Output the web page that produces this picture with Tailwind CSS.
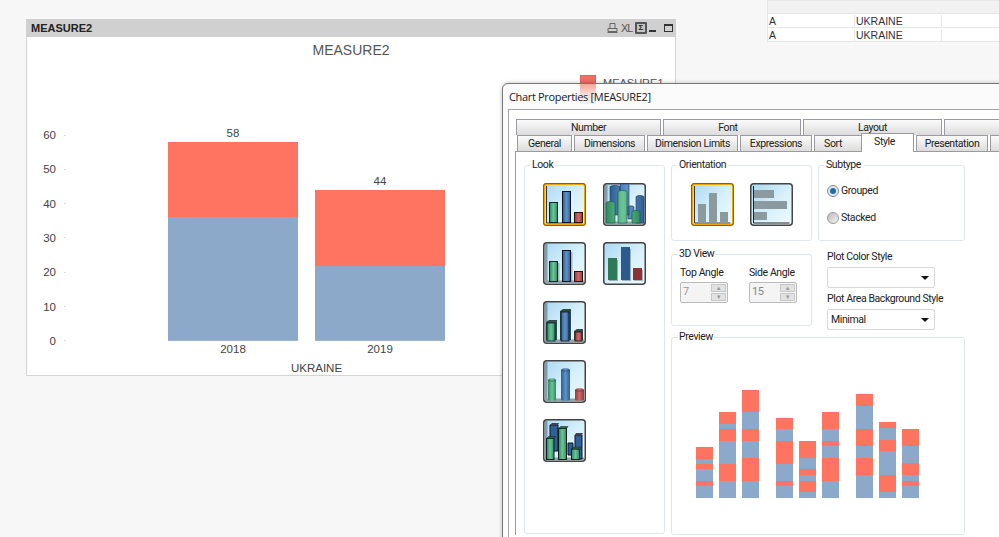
<!DOCTYPE html>
<html lang="en">
<head>
<meta charset="UTF-8">
<title>Chart Properties</title>
<script src="https://cdn.jsdelivr.net/npm/@tailwindcss/browser@4"></script>
</head>
<body class="bg-[#f7f7f7] font-['Liberation_Sans',sans-serif] overflow-hidden">
<!-- shared icon parts -->
<svg class="absolute w-0 h-0" aria-hidden="true">
  <defs>
    <linearGradient id="sky" x1="0" y1="0" x2="1" y2="1"><stop offset="0" stop-color="#a9d8f2"/><stop offset=".55" stop-color="#d9f1fb"/><stop offset="1" stop-color="#eefafd"/></linearGradient>
    <linearGradient id="gr" x1="0" y1="0" x2="1" y2="0"><stop offset="0" stop-color="#2f8a5c"/><stop offset=".5" stop-color="#6cc598"/><stop offset="1" stop-color="#2f8a5c"/></linearGradient>
    <linearGradient id="bl" x1="0" y1="0" x2="1" y2="0"><stop offset="0" stop-color="#2c5f94"/><stop offset=".5" stop-color="#5f93c8"/><stop offset="1" stop-color="#2c5f94"/></linearGradient>
    <linearGradient id="rd" x1="0" y1="0" x2="1" y2="0"><stop offset="0" stop-color="#963a3d"/><stop offset=".5" stop-color="#d0686a"/><stop offset="1" stop-color="#963a3d"/></linearGradient>
    <symbol id="frame" viewBox="0 0 43 43"><rect x=".75" y=".75" width="41.5" height="41.5" rx="3" fill="url(#sky)" stroke="#444" stroke-width="1.5"/></symbol>
    <symbol id="wall" viewBox="0 0 43 43"><path d="M2 2h2.500v36.500H41V41H2z" fill="#76858f" opacity=".75"/></symbol>
  </defs>
</svg>

<div class="relative w-[999px] h-[537px] overflow-hidden">
  <!-- table behind -->
  <div class="absolute left-[767px] top-0 w-[240px] text-[10.5px] text-[#333] border-l border-[#e6e6e6]">
    <div class="h-[14px] bg-[#f2f2f2] border-y border-[#e6e6e6]"></div>
    <div class="grid grid-cols-[87px_87px_1fr] h-[14px] pt-px bg-white border-b border-[#e6e6e6] leading-[13px]">
      <div class="pl-[1px] border-r border-[#e6e6e6]">A</div><div class="pl-[1px] border-r border-[#e6e6e6]">UKRAINE</div><div></div>
    </div>
    <div class="grid grid-cols-[87px_87px_1fr] h-[14px] pt-px bg-white border-b border-[#e6e6e6] leading-[13px]">
      <div class="pl-[1px] border-r border-[#e6e6e6]">A</div><div class="pl-[1px] border-r border-[#e6e6e6]">UKRAINE</div><div></div>
    </div>
  </div>

  <!-- chart window -->
  <div class="absolute left-[26px] top-[19px] w-[650px] h-[357px] border border-[#d4d4d4] border-t-0 bg-white">
    <div class="h-[18px] bg-[#d0d0d0] -mx-px flex items-center justify-between pl-[5px] pr-[3px]">
      <span class="text-[11px] font-bold text-[#222] leading-none">MEASURE2</span>
      <div class="flex items-center text-[#555]">
        <svg class="w-[11px] h-[11px]" viewBox="0 0 11 11" fill="none" stroke="#666"><path d="M3 .5h5v5H3zM1 5.500h9v3H1zM.5 9.500h10"/></svg>
        <span class="ml-[3px] w-[10px] text-[11px] tracking-[-1px] leading-none">XL</span>
        <span class="ml-[4px] w-[12px] h-[12px] border-2 border-[#555] rounded-[1px] flex items-center justify-center bg-[#c4c4c4] text-[8px] leading-none text-[#222] font-bold">Σ</span>
        <span class="ml-[2px] w-[7px] h-[2px] bg-[#333] mt-[6px]"></span>
        <span class="ml-[8px] w-[9px] h-[8px] border border-[#333] border-t-2"></span>
      </div>
    </div>
    <div class="h-[27px] text-center text-[14px] leading-[27px] text-[#555]">MEASURE2</div>
    <!-- legend, runs under the dialog -->
    <div class="absolute left-[553px] top-[56px] flex gap-[7px]">
      <span class="w-[16px] h-[14px] bg-[#ef6f62] border border-[#d9685c]"></span>
      <span class="text-[11px] leading-[14px] text-[#555] pt-px">MEASURE1</span>
    </div>
    <!-- plot -->
    <div class="mt-[64px] flex items-start h-[228px]">
      <div class="w-[39px] h-[220px] flex flex-col justify-between text-[11.5px] leading-[14px] text-[#444]">
        <div class="flex justify-end items-center gap-[8px]"><span>60</span><i class="w-[2px] h-px bg-[#ddd]"></i></div>
        <div class="flex justify-end items-center gap-[8px]"><span>50</span><i class="w-[2px] h-px bg-[#ddd]"></i></div>
        <div class="flex justify-end items-center gap-[8px]"><span>40</span><i class="w-[2px] h-px bg-[#ddd]"></i></div>
        <div class="flex justify-end items-center gap-[8px]"><span>30</span><i class="w-[2px] h-px bg-[#ddd]"></i></div>
        <div class="flex justify-end items-center gap-[8px]"><span>20</span><i class="w-[2px] h-px bg-[#ddd]"></i></div>
        <div class="flex justify-end items-center gap-[8px]"><span>10</span><i class="w-[2px] h-px bg-[#ddd]"></i></div>
        <div class="flex justify-end items-center gap-[8px]"><span>0</span><i class="w-[2px] h-px bg-[#ddd]"></i></div>
      </div>
      <div class="ml-[102px] h-full flex items-end gap-[17px] text-[11.5px] leading-[14px] text-[#444] text-center">
        <div class="w-[130px]">
          <div class="mb-[2px]">58</div>
          <div class="h-[75px] bg-[#ff7361]"></div>
          <div class="h-[124px] bg-[#8da9c9] border-b border-[#9db6d8]"></div>
          <div class="mt-px">2018</div>
        </div>
        <div class="w-[130px]">
          <div class="mb-[2px]">44</div>
          <div class="h-[76px] bg-[#ff7361]"></div>
          <div class="h-[75px] bg-[#8da9c9] border-b border-[#9db6d8]"></div>
          <div class="mt-px">2019</div>
        </div>
      </div>
    </div>
    <div class="mt-[5px] w-[579px] text-center text-[11.5px] leading-[14px] text-[#444]">UKRAINE</div>
  </div>

  <!-- properties dialog -->
  <div class="absolute left-[502px] top-[83px] w-[520px] h-[480px] bg-[#fbfbfc] border border-[#777] rounded-tl-[6px] shadow-[0_0_4px_rgba(0,0,0,0.25)]">
    <div class="absolute left-[77px] top-0 w-[16px] h-[20px] bg-linear-to-b from-[#f5a499] via-[#f7dcd8] to-[#eef3fa] pointer-events-none"></div>
    <div class="relative h-[25px] pl-[6px] text-[11px] leading-[25px] text-[#222] font-['Open_Sans',sans-serif] tracking-[-0.33px]">Chart Properties [MEASURE2]</div>
    <div class="ml-[5px] h-full bg-white border-l border-t border-[#a3a3a8] pl-[6px] pt-[9px] font-['Roboto',sans-serif] text-[10.5px] text-[#222] tracking-[-0.4px]">
      <!-- tab rows -->
      <div class="flex gap-[2px] h-[16px] ml-[1px] text-center leading-[15px]">
        <div class="w-[145px] shrink-0 border border-[#9a9aa0] border-b-0 bg-linear-to-b from-[#fbfbfb] to-[#dcdcdc]">Number</div>
        <div class="w-[138px] shrink-0 pr-[8px] border border-[#9a9aa0] border-b-0 bg-linear-to-b from-[#fbfbfb] to-[#dcdcdc]">Font</div>
        <div class="w-[139px] shrink-0 border border-[#9a9aa0] border-b-0 bg-linear-to-b from-[#fbfbfb] to-[#dcdcdc]">Layout</div>
        <div class="w-[60px] shrink-0 border border-[#9a9aa0] border-b-0 bg-linear-to-b from-[#fbfbfb] to-[#dcdcdc]"></div>
      </div>
      <div class="flex items-end h-[16px] ml-[2px] text-center leading-[15px] relative z-10">
        <div class="w-[55px] shrink-0 mr-[2px] h-[16px] border border-[#9a9aa0] border-b-0 bg-linear-to-b from-[#fbfbfb] to-[#dcdcdc]">General</div>
        <div class="w-[71px] shrink-0 mr-[2px] h-[16px] border border-[#9a9aa0] border-b-0 bg-linear-to-b from-[#fbfbfb] to-[#dcdcdc]">Dimensions</div>
        <div class="w-[91px] shrink-0 mr-[2px] h-[16px] border border-[#9a9aa0] border-b-0 bg-linear-to-b from-[#fbfbfb] to-[#dcdcdc]">Dimension Limits</div>
        <div class="w-[72px] shrink-0 mr-[2px] h-[16px] border border-[#9a9aa0] border-b-0 bg-linear-to-b from-[#fbfbfb] to-[#dcdcdc]">Expressions</div>
        <div class="w-[47px] shrink-0 pr-[10px] h-[16px] border border-[#9a9aa0] border-b-0 border-r-0 bg-linear-to-b from-[#fbfbfb] to-[#dcdcdc]">Sort</div>
        <div class="w-[53px] shrink-0 pr-[6px] mr-[2px] -mb-px h-[19px] border border-[#9a9aa0] border-b-0 bg-white leading-[15px]">Style</div>
        <div class="w-[72px] shrink-0 mr-[2px] h-[16px] border border-[#9a9aa0] border-b-0 bg-linear-to-b from-[#fbfbfb] to-[#dcdcdc]">Presentation</div>
        <div class="w-[60px] shrink-0 h-[16px] border border-[#9a9aa0] border-b-0 bg-linear-to-b from-[#fbfbfb] to-[#dcdcdc]"></div>
      </div>
      <!-- tab page -->
      <div class="border-l border-t border-[#9a9aa0] bg-white pl-[8px] pt-[6px] flex gap-[6px] items-start">
        <fieldset class="w-[141px] h-[376px] border border-[#dfe6ee] rounded-[3px]">
          <legend class="ml-[5px] px-[2px] leading-[14px]">Look</legend>
          <div class="grid grid-cols-[43px_43px] gap-x-[17px] gap-y-[16px] pl-[18px] pt-[11px]">
            <svg class="w-[43px] h-[43px]" viewBox="0 0 43 43">
              <rect x="1" y="1" width="41" height="41" rx="2.5" fill="url(#sky)" stroke="#f0a400" stroke-width="2"/>
              <rect x=".4" y=".4" width="42.2" height="42.2" rx="3" fill="none" stroke="#4a3a10" stroke-width=".7"/>
              <path d="M3.500 3v37h36" fill="none" stroke="#333" stroke-width="1"/>
              <rect x="6.500" y="19.500" width="8" height="20" fill="url(#gr)" stroke="#123" stroke-width="1"/>
              <rect x="19.500" y="8.500" width="8" height="31" fill="url(#bl)" stroke="#112" stroke-width="1"/>
              <rect x="31.500" y="29.500" width="8" height="10" fill="url(#rd)" stroke="#211" stroke-width="1"/>
            </svg>
            <svg class="w-[43px] h-[43px]" viewBox="0 0 43 43">
              <use href="#frame"/><use href="#wall"/>
              <path d="M7 4c0-2 10-2 10 0v28H7zM17 2c0-1.500 9-1.500 9 0v30h-9zM33 14c0-2 8-2 8 0v26h-8zM25 24c0-1.500 6-1.500 6 0v12h-6z" fill="url(#bl)" stroke="#234" stroke-width=".6"/>
              <path d="M3 20c0-2 9-2 9 0v20H3zM15 9c0-2 9-2 9 0v31h-9zM29 29c0-2 8-2 8 0v11h-8z" fill="url(#gr)" stroke="#154" stroke-width=".6"/>
            </svg>
            <svg class="w-[43px] h-[43px]" viewBox="0 0 43 43">
              <use href="#frame"/><use href="#wall"/>
              <path d="M14.500 21h2v19h-2zM27.500 10h2v30h-2z" fill="#7d8f9c" opacity=".6"/>
              <rect x="6.500" y="19.500" width="8" height="20" fill="url(#gr)" stroke="#123"/>
              <rect x="19.500" y="8.500" width="8" height="31" fill="url(#bl)" stroke="#112"/>
              <rect x="31.500" y="29.500" width="8" height="10" fill="url(#rd)" stroke="#211"/>
            </svg>
            <svg class="w-[43px] h-[43px]" viewBox="0 0 43 43">
              <use href="#frame"/>
              <rect x="5" y="16" width="9" height="22" fill="#2e7a57"/><rect x="18" y="5" width="9" height="33" fill="#2d5a8c"/><rect x="30" y="26" width="9" height="12" fill="#8c3336"/>
              <path d="M14 18h1v21H6v-1h8zM27 7h1v32h-9v-1h8zM39 28h1v11h-9v-1h8z" fill="#6d8794" opacity=".6"/>
            </svg>
            <svg class="w-[43px] h-[43px] col-start-1" viewBox="0 0 43 43">
              <use href="#frame"/><use href="#wall"/>
              <path d="M3 21l3-2h8v20H3zM17 10l3-2h8v31H17zM31 30l3-2h6v11h-9z" fill="#1e3b33" opacity=".9"/>
              <rect x="4" y="22" width="8" height="18" fill="url(#gr)" stroke="#123" stroke-width=".8"/>
              <rect x="18" y="11" width="8" height="29" fill="url(#bl)" stroke="#112" stroke-width=".8"/>
              <rect x="32" y="31" width="7" height="9" fill="url(#rd)" stroke="#211" stroke-width=".8"/>
            </svg>
            <svg class="w-[43px] h-[43px] col-start-1" viewBox="0 0 43 43">
              <use href="#frame"/><use href="#wall"/>
              <path d="M5 20c0-2.500 8-2.500 8 0v20c0 1-8 1-8 0z" fill="url(#gr)"/>
              <path d="M18 10c0-2.500 9-2.500 9 0v30c0 1-9 1-9 0z" fill="url(#bl)"/>
              <path d="M32 30c0-2.500 9-2.500 9 0v10c0 1-9 1-9 0z" fill="url(#rd)"/>
              <path d="M5 20c0 1.500 8 1.500 8 0M18 10c0 1.500 9 1.500 9 0M32 30c0 1.500 9 1.500 9 0" stroke="#234" fill="none" stroke-width=".5"/>
            </svg>
            <svg class="w-[43px] h-[43px] col-start-1" viewBox="0 0 43 43">
              <use href="#frame"/><use href="#wall"/>
              <path d="M7 6h8v26H7zM32 16h7v24h-7zM25 24h5v12h-5z" fill="#2f6099" stroke="#0c1520" stroke-width="1"/>
              <path d="M9 4h7l-1 2H7zM33 14h7l-1 2h-7z" fill="#445"/>
              <rect x="3.500" y="19.500" width="7.500" height="21" fill="url(#gr)" stroke="#0c1f18"/>
              <rect x="15.500" y="9.500" width="8" height="31" fill="url(#gr)" stroke="#0c1f18"/>
              <rect x="28.500" y="30" width="8" height="10.500" fill="url(#gr)" stroke="#0c1f18"/>
              <path d="M3.500 19.500l2-2h7l-1.500 2zM15.500 9.500l2-2h7.500l-1.500 2zM28.500 30l2-2h7l-1 2z" fill="#2d6a4c" stroke="#0c1f18" stroke-width=".5"/>
            </svg>
          </div>
        </fieldset>

        <div class="w-[294px]">
          <div class="flex gap-[6px]">
            <fieldset class="w-[141px] h-[83px] border border-[#dfe6ee] rounded-[3px]">
              <legend class="ml-[5px] px-[2px] leading-[14px]">Orientation</legend>
              <div class="flex gap-[16px] pl-[19px] pt-[11px]">
                <svg class="w-[43px] h-[43px]" viewBox="0 0 43 43">
                  <rect x="1" y="1" width="41" height="41" rx="2.5" fill="url(#sky)" stroke="#f0a400" stroke-width="2"/>
                  <rect x=".4" y=".4" width="42.200" height="42.200" rx="3" fill="none" stroke="#4a3a10" stroke-width=".7"/>
                  <path d="M3.500 3v37h36" fill="none" stroke="#333"/>
                  <path d="M7 21h8v19H7zM18 10h8v30h-8zM29 29h8v11h-8z" fill="#8b9a9e"/>
                </svg>
                <svg class="w-[43px] h-[43px]" viewBox="0 0 43 43">
                  <use href="#frame"/>
                  <path d="M3.500 3v37h36" fill="none" stroke="#222"/>
                  <path d="M4 7h20v8H4zM4 18h33v8H4zM4 29h13v8H4z" fill="#8b9a9e"/>
                </svg>
              </div>
            </fieldset>
            <fieldset class="w-[147px] h-[83px] border border-[#dfe6ee] rounded-[3px]">
              <legend class="ml-[5px] px-[2px] leading-[14px]">Subtype</legend>
              <div class="pl-[8px] pt-[11px] flex flex-col gap-[12px]">
                <div class="flex items-center gap-[2px] h-[15px]"><span class="w-[12px] h-[12px] rounded-full border border-[#888] bg-[#dfeaf2] flex items-center justify-center"><i class="w-[6px] h-[6px] rounded-full bg-[#1f6ea8]"></i></span>Grouped</div>
                <div class="flex items-center gap-[2px] h-[15px]"><span class="w-[12px] h-[12px] rounded-full border border-[#999] bg-linear-to-br from-[#bbb] to-[#f4f4f4]"></span>Stacked</div>
              </div>
            </fieldset>
          </div>
          <div class="flex gap-[15px] mt-[6px] items-start">
            <fieldset class="w-[141px] h-[79px] border border-[#dfe6ee] rounded-[3px]">
              <legend class="ml-[6px] px-[1px] leading-[14px]">3D View</legend>
              <div class="flex gap-[21px] pl-[8px] pt-[5px]">
                <div>
                  <div class="leading-[14px] mb-[2px]">Top Angle</div>
                  <div class="w-[48px] h-[21px] flex items-center justify-between border border-[#bbb] rounded-[2px] bg-[#f4f4f4] pl-[2px] pr-px text-[#999] text-[11px]">7
                    <span class="flex flex-col w-[15px] h-[17px] gap-px"><i class="flex-1 bg-[#e2e2e2] border border-[#c8c8c8] text-[6px] leading-[5px] not-italic text-center text-[#999]">▲</i><i class="flex-1 bg-[#e2e2e2] border border-[#c8c8c8] text-[6px] leading-[5px] not-italic text-center text-[#999]">▼</i></span>
                  </div>
                </div>
                <div>
                  <div class="leading-[14px] mb-[2px]">Side Angle</div>
                  <div class="w-[48px] h-[21px] flex items-center justify-between border border-[#bbb] rounded-[2px] bg-[#f4f4f4] pl-[2px] pr-px text-[#888] text-[11px]">15
                    <span class="flex flex-col w-[15px] h-[17px] gap-px"><i class="flex-1 bg-[#e2e2e2] border border-[#c8c8c8] text-[6px] leading-[5px] not-italic text-center text-[#999]">▲</i><i class="flex-1 bg-[#e2e2e2] border border-[#c8c8c8] text-[6px] leading-[5px] not-italic text-center text-[#999]">▼</i></span>
                  </div>
                </div>
              </div>
            </fieldset>
            <div class="pt-[3px]">
              <div class="leading-[14px] mb-[3px]">Plot Color Style</div>
              <div class="w-[108px] h-[21px] border border-[#d8d8d8] rounded-[2px] bg-white flex items-center justify-end pr-[5px] text-[#111]"><svg class="w-[8px] h-[4px]" viewBox="0 0 8 4"><path d="M0 0h8L4 4z" fill="#111"/></svg></div>
              <div class="leading-[14px] mt-[4px] mb-[3px]">Plot Area Background Style</div>
              <div class="w-[108px] h-[21px] border border-[#d8d8d8] rounded-[2px] bg-white flex items-center justify-between pl-[3px] pr-[5px]">Minimal<svg class="w-[8px] h-[4px]" viewBox="0 0 8 4"><path d="M0 0h8L4 4z" fill="#111"/></svg></div>
            </div>
          </div>
          <fieldset class="w-[294px] h-[205px] border border-[#dfe6ee] rounded-[3px]">
            <legend class="ml-[6px] px-[1px] leading-[14px]">Preview</legend>
            <div id="preview" class="flex items-end h-[154px] pl-[23px]"></div>
          </fieldset>
        </div>
      </div>
    </div>
  </div>
</div>

<script>
  // segment heights bottom to top: blue, red, blue, red, blue, red
  const previewBars = [
    [12, 5, 12, 5, 5, 12], [17, 17, 23, 12, 5, 12], [17, 23, 17, 12, 17, 22],
    null,
    [12, 5, 17, 23, 12, 11], [6, 11, 6, 6, 11, 17], [17, 23, 12, 5, 12, 17],
    null,
    [23, 17, 12, 17, 23, 12], [6, 17, 24, 11, 12, 6], [12, 5, 6, 12, 17, 17]
  ];
  const preview = document.getElementById('preview');
  let prevGap = false;
  previewBars.forEach((bar, i) => {
    if (!bar) { prevGap = true; return; }
    const el = document.createElement('div');
    el.className = 'w-[19px] flex flex-col-reverse border-x border-t border-white/30';
    el.style.marginLeft = i === 0 ? '0' : (prevGap ? '15px' : '4px');
    prevGap = false;
    bar.forEach((h, j) => {
      const seg = document.createElement('div');
      seg.className = j % 2 ? 'bg-[#ff7361]' : 'bg-[#8da9c9]';
      seg.style.height = h + 'px';
      el.appendChild(seg);
    });
    preview.appendChild(el);
  });
</script>
</body>
</html>
